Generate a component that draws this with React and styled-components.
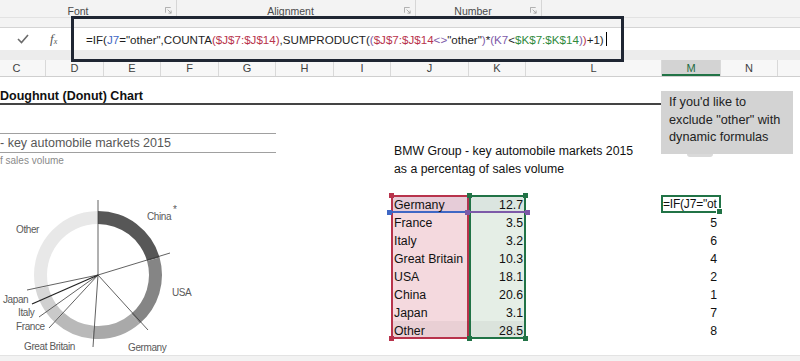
import React from "react";
import styled, { createGlobalStyle } from "styled-components";

const colors = {
  ink: "#1e1e1e",
  blue: "#3f67c4",
  red: "#b8334c",
  purple: "#7d5aa8",
  green: "#2f8a3c",
  excelGreen: "#217346",
};

const columns = [
  { name: "C", width: 58 },
  { name: "D", width: 58 },
  { name: "E", width: 57 },
  { name: "F", width: 58 },
  { name: "G", width: 57 },
  { name: "H", width: 58 },
  { name: "I", width: 57 },
  { name: "J", width: 78 },
  { name: "K", width: 57 },
  { name: "L", width: 136 },
  { name: "M", width: 59, active: true },
  { name: "N", width: 57 },
  { name: "", width: 60 },
];
const colTemplate = columns.map(c => `${c.width}px`).join(" ");

const ribbonGroups = [
  { label: "Font", width: 186 },
  { label: "Alignment", width: 239 },
  { label: "Number", width: 126 },
];

const formula = [
  ["=IF(", "ink"],
  ["J7", "blue"],
  ['="other",COUNTA', "ink"],
  ["($J$7:$J$14)", "red"],
  [",SUMPRODUCT(", "ink"],
  ["(", "purple"],
  ["$J$7:$J$14", "red"],
  ["<>", "purple"],
  ['"other"', "ink"],
  [")", "purple"],
  ["*", "ink"],
  ["(K7", "purple"],
  ["<", "ink"],
  ["$K$7:$K$14", "green"],
  [")", "purple"],
  [")", "red"],
  ["+1)", "ink"],
];

const markets = [
  { name: "Germany", share: "12.7", rank: null },
  { name: "France", share: "3.5", rank: 5 },
  { name: "Italy", share: "3.2", rank: 6 },
  { name: "Great Britain", share: "10.3", rank: 4 },
  { name: "USA", share: "18.1", rank: 2 },
  { name: "China", share: "20.6", rank: 1 },
  { name: "Japan", share: "3.1", rank: 7 },
  { name: "Other", share: "28.5", rank: 8 },
];

// chart order and greys, clockwise from 12 o'clock
const chartOrder = [
  { name: "China", fill: "#575757" },
  { name: "USA", fill: "#858585" },
  { name: "Germany", fill: "#a9a9a9" },
  { name: "Great Britain", fill: "#b9b9b9" },
  { name: "France", fill: "#c9c9c9" },
  { name: "Italy", fill: "#d0d0d0" },
  { name: "Japan", fill: "#d7d7d7" },
  { name: "Other", fill: "#e8e8e8" },
];

const CX = 98;
const CY = 106;
const RO = 64;
const RI = 51;

const pt = (r, a) => {
  const rad = (a * Math.PI) / 180;
  return [CX + r * Math.sin(rad), CY - r * Math.cos(rad)];
};

const arcPath = (a0, a1) => {
  const [x0, y0] = pt(RO, a0);
  const [x1, y1] = pt(RO, a1);
  const [x2, y2] = pt(RI, a1);
  const [x3, y3] = pt(RI, a0);
  const large = a1 - a0 > 180 ? 1 : 0;
  return `M${x0} ${y0} A${RO} ${RO} 0 ${large} 1 ${x1} ${y1} L${x2} ${y2} A${RI} ${RI} 0 ${large} 0 ${x3} ${y3} Z`;
};

let acc = 0;
const segments = chartOrder.map(s => {
  const share = parseFloat(markets.find(m => m.name === s.name).share);
  const a0 = acc;
  acc += (share / 100) * 360;
  return { ...s, a0, a1: acc };
});

const leaders = [
  { x: 98, y: 31 },
  { x: 170, y: 84 },
  { x: 148, y: 161 },
  { x: 93, y: 178 },
  { x: 49, y: 159 },
  { x: 39, y: 148 },
  { x: 32, y: 135, strong: true },
  { x: 27, y: 121 },
];

const chartLabels = [
  { text: "Other", x: 16, y: 64 },
  { text: "China", x: 147, y: 51 },
  { text: "USA", x: 172, y: 127 },
  { text: "Japan", x: 3, y: 134 },
  { text: "Italy", x: 18, y: 147 },
  { text: "France", x: 16, y: 161 },
  { text: "Great Britain", x: 24, y: 181 },
  { text: "Germany", x: 128, y: 182 },
];

const Launcher = () => (
  <LauncherIcon viewBox="0 0 8 8" width="8" height="8">
    <path d="M0.5 6.5V0.5H6.5" fill="none" stroke="#a3a3a3" strokeWidth="1" />
    <path d="M3 3L7 7M7 4V7H4" fill="none" stroke="#a3a3a3" strokeWidth="1" />
  </LauncherIcon>
);

const Doughnut = () => (
  <ChartSvg width="276" height="186" viewBox="0 0 276 186">
    {segments.map(s => (
      <path key={s.name} d={arcPath(s.a0, s.a1)} fill={s.fill} />
    ))}
    {leaders.map((l, i) => (
      <line
        key={i}
        x1={CX}
        y1={CY}
        x2={l.x}
        y2={l.y}
        stroke={l.strong ? "#222" : "#3a3a3a"}
        strokeWidth={l.strong ? 1.3 : 0.8}
      />
    ))}
    {chartLabels.map(l => (
      <ChartLabel key={l.text} x={l.x} y={l.y}>
        {l.text}
      </ChartLabel>
    ))}
    <ChartLabel x={173} y={44} fontSize="7">
      *
    </ChartLabel>
  </ChartSvg>
);

const App = () => {
  return (
    <>
      <GlobalStyle />
      <Window>
        <Ribbon>
          {ribbonGroups.map(g => (
            <Group key={g.label} $width={g.width}>
              <GroupLabel>{g.label}</GroupLabel>
              <Launcher />
            </Group>
          ))}
        </Ribbon>
        <RibbonGap />
        <FormulaRow>
          <Controls>
            <svg width="12" height="10" viewBox="0 0 12 10">
              <path d="M1 5L4.5 8.5L11 1" fill="none" stroke="#6b6b6b" strokeWidth="1.6" />
            </svg>
            <Fx>
              f<sub>x</sub>
            </Fx>
          </Controls>
          <Formula>
            {formula.map(([text, tone], i) => (
              <Token key={i} $color={colors[tone]}>
                {text}
              </Token>
            ))}
            <Caret />
          </Formula>
        </FormulaRow>
        <FormulaGap />
        <HeaderRow>
          {columns.map((c, i) => (
            <ColHeader key={i} $active={c.active}>
              {c.name}
            </ColHeader>
          ))}
        </HeaderRow>
        <Sheet>
          <TitleCell>Doughnut (Donut) Chart</TitleCell>
          <Cell $col={8} $row={5}>BMW Group - key automobile markets 2015</Cell>
          <Cell $col={8} $row={6}>as a percentag of sales volume</Cell>

          <Range $col={8} $color={colors.red} $fill="#f4d9de">
            <Handle $color={colors.red} $top $start />
            <Handle $color={colors.red} $start />
          </Range>
          <Range $col={9} $color={colors.excelGreen} $fill="#e5eee6">
            <Handle $color={colors.excelGreen} $top $start />
            <Handle $color={colors.excelGreen} $top />
            <Handle $color={colors.excelGreen} $start />
            <Handle $color={colors.excelGreen} />
          </Range>
          <Shade $col={8} $row={8} $inset="2px 0 2px 2px" $tint="rgba(90, 80, 150, 0.09)" />
          <Shade $col={9} $row={8} $inset="2px 2px 2px 2px" $tint="rgba(70, 80, 130, 0.06)" />
          <Shade $col={8} $row={15} $inset="0 0 2px 2px" $tint="rgba(0, 0, 0, 0.045)" />
          <Shade $col={9} $row={15} $inset="0 2px 2px 2px" $tint="rgba(0, 0, 0, 0.045)" />
          <RowMark $col={8} $color={colors.blue}>
            <Handle $color={colors.blue} $start />
          </RowMark>
          <RowMark $col={9} $color={colors.purple}>
            <Handle $color={colors.purple} $start />
            <Handle $color={colors.purple} />
          </RowMark>

          {markets.map((m, i) => (
            <React.Fragment key={m.name}>
              <Cell $col={8} $row={8 + i}>{m.name}</Cell>
              <Cell $col={9} $row={8 + i} $right>
                {m.share}
              </Cell>
              {m.rank !== null && (
                <Cell $col={11} $row={8 + i} $right $pad={4}>
                  {m.rank}
                </Cell>
              )}
            </React.Fragment>
          ))}
          <ActiveCell>
            <ActiveText>=IF(J7="ot</ActiveText>
            <FillHandle />
          </ActiveCell>

          <Picture>
            <PicRule />
            <PicTitle>- key automobile markets 2015</PicTitle>
            <PicRule />
            <PicSub>f sales volume</PicSub>
            <Doughnut />
          </Picture>

          <Note>
            If you'd like to
            <br />
            exclude "other" with
            <br />
            dynamic formulas
          </Note>
        </Sheet>
        <BottomBar />
        <FocusBox />
      </Window>
    </>
  );
};

export default App;

const GlobalStyle = createGlobalStyle`
  html, body {
    margin: 0;
    padding: 0;
    background: #ffffff;
  }
  body {
    font-family: "Liberation Sans", Arial, sans-serif;
  }
`;

const Window = styled.div`
  position: relative;
  width: 800px;
  height: 361px;
  overflow: hidden;
  background: #ffffff;
`;

const Ribbon = styled.div`
  display: flex;
  height: 17px;
  margin-left: -9px;
  background: #f3f3f3;
`;

const Group = styled.div`
  display: flex;
  align-items: center;
  width: ${p => p.$width}px;
  flex-shrink: 0;
  padding-right: 4px;
  box-sizing: border-box;
  border-right: 1px solid #d6d6d6;
`;

const GroupLabel = styled.span`
  flex: 1;
  text-align: center;
  font-size: 10.5px;
  color: #4a4a4a;
  padding-top: 4px;
`;

const LauncherIcon = styled.svg`
  width: 7px;
  height: 7px;
  margin-top: 4px;
`;

const RibbonGap = styled.div`
  height: 11px;
  box-sizing: border-box;
  background: #f3f3f3;
  border-top: 1px solid #e2e2e2;
  border-bottom: 1px solid #d4d4d4;
`;

const FormulaRow = styled.div`
  display: flex;
  align-items: center;
  height: 22px;
  background: #ffffff;
`;

const Controls = styled.div`
  display: flex;
  align-items: center;
  width: 71px;
  padding-left: 17px;
  gap: 21px;
  box-sizing: border-box;
`;

const Fx = styled.span`
  font-family: "Liberation Serif", serif;
  font-style: italic;
  font-size: 13px;
  color: #555;
  sub {
    font-size: 8px;
    vertical-align: -1px;
  }
`;

const Formula = styled.div`
  display: flex;
  align-items: center;
  padding-left: 15px;
  font-size: 11.6px;
  white-space: pre;
`;

const Token = styled.span`
  color: ${p => p.$color};
`;

const Caret = styled.span`
  display: inline-block;
  width: 1px;
  height: 14px;
  margin-left: 2px;
  background: #000;
`;

const FormulaGap = styled.div`
  height: 10px;
  background: #ececec;
`;

const HeaderRow = styled.div`
  display: grid;
  grid-template-columns: ${colTemplate};
  margin-left: -12px;
  height: 17px;
  background: #f7f7f7;
  border-bottom: 1px solid #cfcfcf;
  box-sizing: border-box;
`;

const ColHeader = styled.div`
  display: flex;
  align-items: center;
  justify-content: center;
  font-size: 11px;
  color: ${p => (p.$active ? "#1f6b3f" : "#3f3f3f")};
  background: ${p => (p.$active ? "#d3d3d3" : "transparent")};
  border-right: 1px solid #d9d9d9;
  box-shadow: ${p => (p.$active ? `inset 0 -2px 0 ${colors.excelGreen}` : "none")};
`;

const Sheet = styled.div`
  position: relative;
  display: grid;
  grid-template-columns: ${colTemplate};
  grid-template-rows: 10px repeat(15, 18px);
  margin-left: -12px;
  height: 278px;
  overflow: hidden;
  font-size: 12.3px;
  color: #111;
`;

const TitleCell = styled.div`
  grid-column: 1 / 11;
  grid-row: 2;
  padding: 2px 0 0 12px;
  line-height: 14px;
  font-size: 12.5px;
  font-weight: bold;
  color: #111;
  border-bottom: 2px solid #444;
`;

const Cell = styled.div`
  position: relative;
  grid-column: ${p => p.$col};
  grid-row: ${p => p.$row};
  box-sizing: border-box;
  padding: 1px ${p => (p.$right ? p.$pad || 3 : 0)}px 0 ${p => (p.$right ? 0 : 3)}px;
  line-height: 18px;
  text-align: ${p => (p.$right ? "right" : "left")};
  white-space: nowrap;
`;

const Range = styled.div`
  position: relative;
  grid-column: ${p => p.$col};
  grid-row: 8 / 16;
  border: 2px solid ${p => p.$color};
  background: ${p => p.$fill};
`;

const Shade = styled.div`
  position: relative;
  grid-column: ${p => p.$col};
  grid-row: ${p => p.$row};
  margin: ${p => p.$inset};
  background: ${p => p.$tint};
`;

const RowMark = styled.div`
  position: relative;
  grid-column: ${p => p.$col};
  grid-row: 8;
  border-bottom: 2px solid ${p => p.$color};
`;

const Handle = styled.span`
  position: absolute;
  width: 5px;
  height: 5px;
  background: ${p => p.$color};
  ${p => (p.$top ? "top: -4px;" : "bottom: -4px;")}
  ${p => (p.$start ? "left: -4px;" : "right: -4px;")}
`;

const ActiveCell = styled.div`
  position: relative;
  grid-column: 11;
  grid-row: 8;
  margin-left: -1px;
  border: 2px solid ${colors.excelGreen};
`;

const ActiveText = styled.div`
  line-height: 15px;
  font-size: 12px;
  letter-spacing: -0.2px;
  white-space: nowrap;
  overflow: hidden;
  color: #111;
`;

const FillHandle = styled.span`
  position: absolute;
  right: -4px;
  bottom: -4px;
  width: 5px;
  height: 5px;
  background: ${colors.excelGreen};
  border: 1px solid #fff;
`;

const Picture = styled.div`
  position: absolute;
  left: 12px;
  top: 56px;
  width: 276px;
  display: flex;
  flex-direction: column;
`;

const PicRule = styled.div`
  height: 1px;
  background: #a0a0a0;
`;

const PicTitle = styled.div`
  font-size: 12.5px;
  line-height: 18px;
  color: #575757;
  white-space: nowrap;
`;

const PicSub = styled.div`
  font-size: 10px;
  line-height: 16px;
  color: #8a8a8a;
  white-space: nowrap;
`;

const ChartSvg = styled.svg`
  display: block;
`;

const ChartLabel = styled.text`
  font-family: "Liberation Sans", Arial, sans-serif;
  font-size: 10px;
  letter-spacing: -0.4px;
  fill: #5a5a5a;
`;

const Note = styled.div`
  position: absolute;
  left: 673px;
  top: 14px;
  width: 132px;
  height: 63px;
  box-sizing: border-box;
  padding: 3px 0 0 8px;
  background: #d3d3d3;
  font-size: 12.7px;
  line-height: 17.5px;
  color: #222;
  white-space: nowrap;

  &::after {
    content: "";
    position: absolute;
    left: 26px;
    bottom: -3px;
    width: 26px;
    height: 3px;
    background: #d9d9d9;
    border-radius: 0 0 3px 3px;
  }
`;

const BottomBar = styled.div`
  height: 6px;
  background: #f2f2f2;
  border-top: 1px solid #e3e3e3;
`;

const FocusBox = styled.div`
  position: absolute;
  left: 71px;
  top: 16px;
  width: 553px;
  height: 46px;
  box-sizing: border-box;
  border: 3px solid #1f2633;
  pointer-events: none;
`;
